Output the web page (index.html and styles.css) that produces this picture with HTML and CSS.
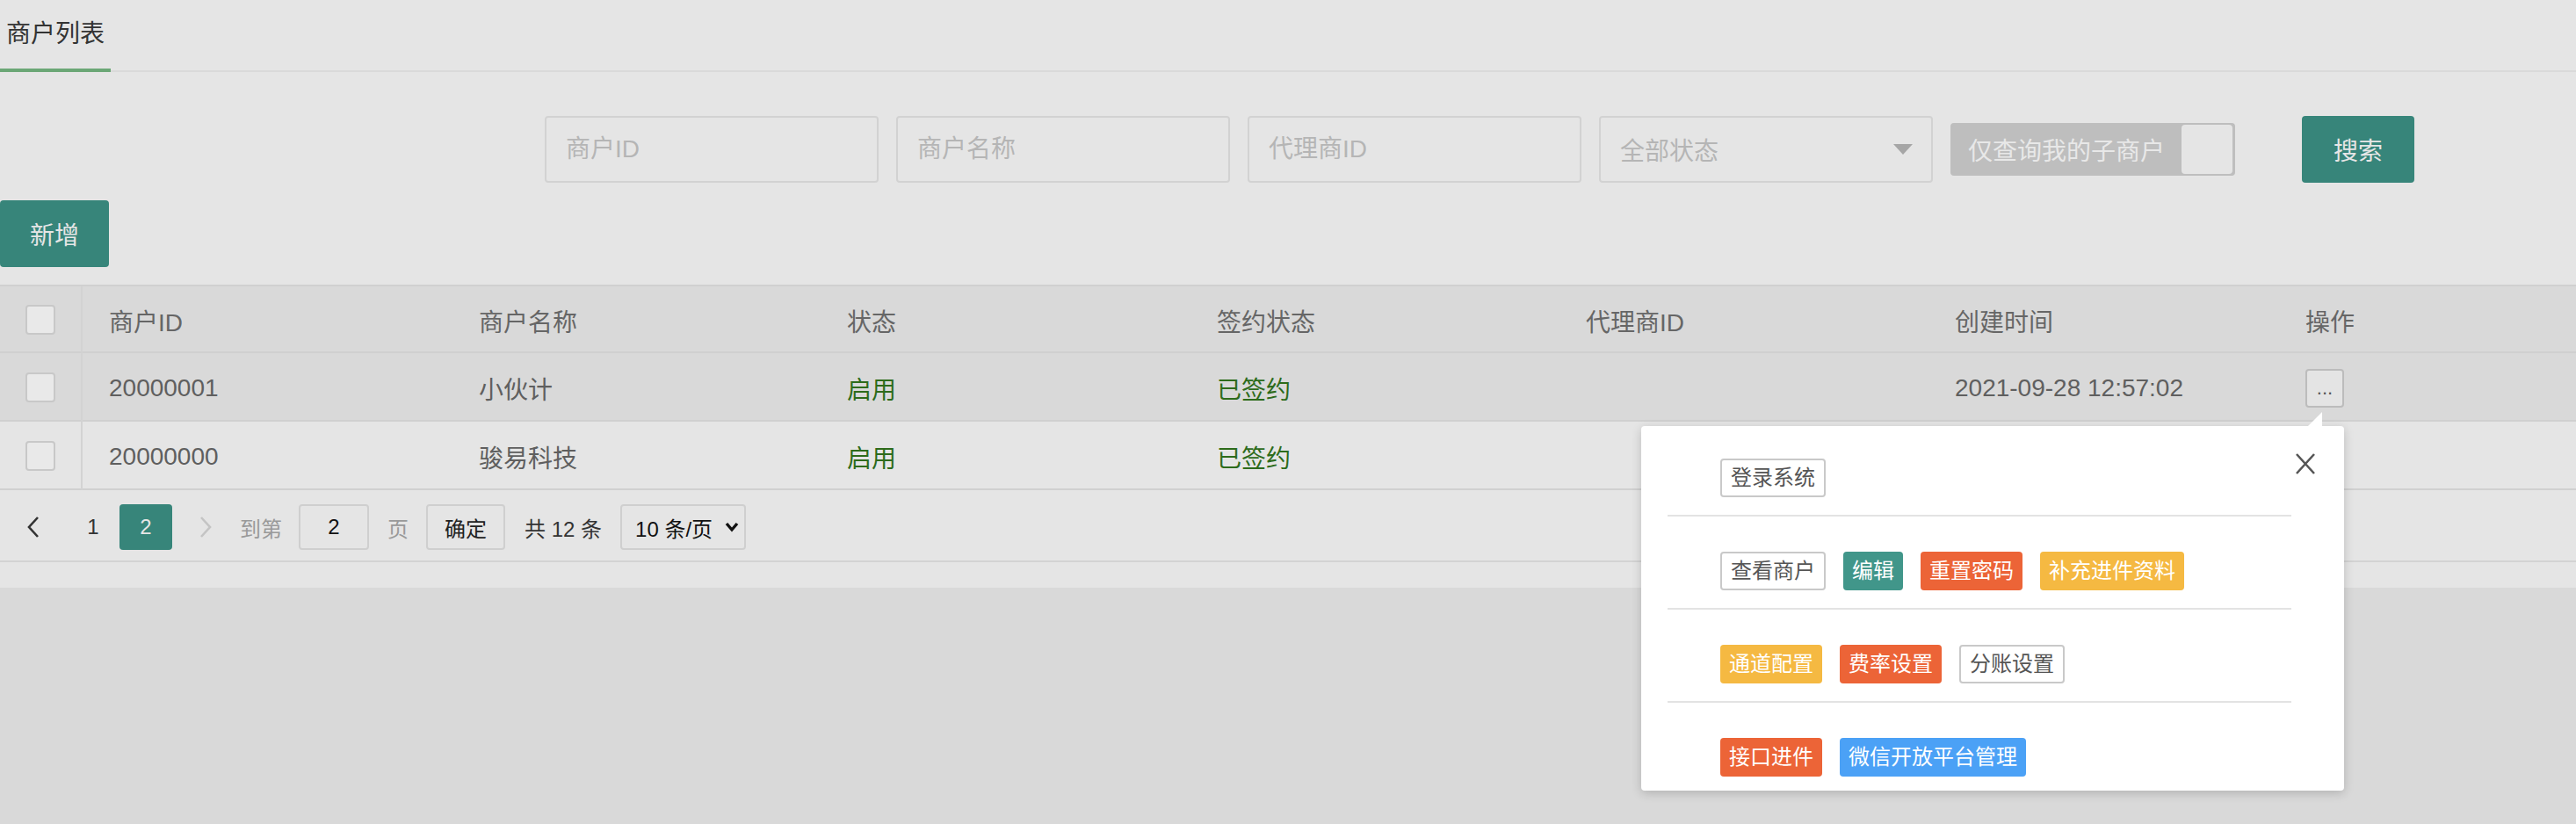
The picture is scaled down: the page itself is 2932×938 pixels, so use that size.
FILE: index.html
```html
<!DOCTYPE html>
<html lang="zh-CN">
<head>
    <meta charset="UTF-8">
    <meta name="viewport" content="width=device-width, initial-scale=1.0">
    <title>商户列表</title>
    <link rel="stylesheet" href="styles.css">
</head>
<body>
<div class="page">
    <ul class="tab-title">
        <li class="this">商户列表</li>
    </ul>

    <!-- search conditions -->
    <form class="search-bar">
        <input class="field" type="text" placeholder="商户ID">
        <input class="field" type="text" placeholder="商户名称">
        <input class="field" type="text" placeholder="代理商ID">
        <div class="field select-box">全部状态<i class="caret"></i></div>
        <div class="switch"><em>仅查询我的子商户</em><i class="knob"></i></div>
        <button type="button" class="btn btn-search">搜索</button>
    </form>

    <div class="toolbar">
        <button type="button" class="btn">新增</button>
    </div>

    <table class="grid">
        <colgroup>
            <col style="width: 94px">
            <col style="width: 421px">
            <col style="width: 419px">
            <col style="width: 421px">
            <col style="width: 420px">
            <col style="width: 420px">
            <col style="width: 399px">
            <col>
        </colgroup>
        <thead>
            <tr>
                <th class="check"><i class="checkbox"></i></th>
                <th>商户ID</th>
                <th>商户名称</th>
                <th>状态</th>
                <th>签约状态</th>
                <th>代理商ID</th>
                <th>创建时间</th>
                <th>操作</th>
            </tr>
        </thead>
        <tbody>
            <tr class="hover">
                <td class="check"><i class="checkbox"></i></td>
                <td>20000001</td>
                <td>小伙计</td>
                <td class="on">启用</td>
                <td class="on">已签约</td>
                <td></td>
                <td>2021-09-28 12:57:02</td>
                <td>
                    <div class="dropdown">
                        <button type="button" class="more">...</button>
                        <div class="menu-pop">
                            <span class="close">
                                <svg width="24" height="24" viewBox="0 0 24 24"><path d="M2 1 L22 23 M22 1 L2 23" stroke="#555" stroke-width="2.6" fill="none"/></svg>
                            </span>
                            <div class="act-row">
                                <button type="button" class="tag tag-line">登录系统</button>
                            </div>
                            <div class="act-row">
                                <button type="button" class="tag tag-line">查看商户</button>
                                <button type="button" class="tag tag-teal">编辑</button>
                                <button type="button" class="tag tag-red">重置密码</button>
                                <button type="button" class="tag tag-yellow">补充进件资料</button>
                            </div>
                            <div class="act-row">
                                <button type="button" class="tag tag-yellow">通道配置</button>
                                <button type="button" class="tag tag-red">费率设置</button>
                                <button type="button" class="tag tag-line">分账设置</button>
                            </div>
                            <div class="act-row">
                                <button type="button" class="tag tag-red">接口进件</button>
                                <button type="button" class="tag tag-blue">微信开放平台管理</button>
                            </div>
                        </div>
                    </div>
                </td>
            </tr>
            <tr>
                <td class="check"><i class="checkbox"></i></td>
                <td>20000000</td>
                <td>骏易科技</td>
                <td class="on">启用</td>
                <td class="on">已签约</td>
                <td></td>
                <td></td>
                <td></td>
            </tr>
        </tbody>
    </table>

    <!-- paging -->
    <div class="pager">
        <a class="pg prev">
            <svg width="14" height="24" viewBox="0 0 14 24"><path d="M12 1 L2 12 L12 23" stroke="#333" stroke-width="2.6" fill="none"/></svg>
        </a>
        <a class="pg num">1</a>
        <a class="pg cur">2</a>
        <a class="pg next">
            <svg width="14" height="24" viewBox="0 0 14 24"><path d="M2 1 L12 12 L2 23" stroke="#c4c4c4" stroke-width="2.6" fill="none"/></svg>
        </a>
        <span class="skip">到第</span>
        <input class="pg-input" type="text" value="2">
        <span class="skip unit">页</span>
        <button type="button" class="pg-btn">确定</button>
        <span class="count">共 12 条</span>
        <div class="limits">10 条/页
            <svg width="16" height="12" viewBox="0 0 16 12"><path d="M2 2 L8 9 L14 2" stroke="#111" stroke-width="3.4" fill="none"/></svg>
        </div>
    </div>
</div>
</body>
</html>
```

FILE: styles.css
```css
* {
    box-sizing: border-box;
}

html,
body {
    height: 100%;
}

body {
    margin: 0;
    min-height: 100vh;
    background-color: #d9d9d9;
    font-family: "Liberation Sans", "Noto Sans CJK SC", sans-serif;
    color: #5f5f5f;
}

.page {
    background-color: #e5e5e5;
    padding-bottom: 29px;
}

/* tab header */
.tab-title {
    display: flex;
    margin: 0;
    padding: 0;
    list-style: none;
    height: 82px;
    border-bottom: 2px solid #dadada;
}

.tab-title li {
    width: 126px;
    height: 82px;
    line-height: 78px;
    text-align: center;
    font-size: 28px;
    color: #333;
}

.tab-title li.this {
    border-bottom: 4px solid #6ba776;
}

/* search form */
.search-bar {
    display: flex;
    align-items: center;
    margin: 50px 0 0;
    padding-left: 620px;
}

.field {
    width: 380px;
    height: 76px;
    margin-right: 20px;
    padding: 0 22px;
    border: 2px solid #d2d2d2;
    border-radius: 4px;
    background: transparent;
    font-family: inherit;
    font-size: 28px;
    color: #555;
    outline: none;
}

.field::placeholder {
    color: #b5b5b5;
}

.select-box {
    display: flex;
    align-items: center;
    justify-content: space-between;
    color: #b5b5b5;
}

.caret {
    width: 0;
    height: 0;
    margin-right: -1px;
    border-left: 11px solid transparent;
    border-right: 11px solid transparent;
    border-top: 12px solid #a6a6a6;
}

.switch {
    display: flex;
    align-items: center;
    width: 324px;
    height: 60px;
    margin-right: 76px;
    padding-left: 18px;
    border: 2px solid #bebebe;
    border-radius: 4px;
    background-color: #bebebe;
}

.switch em {
    font-style: normal;
    font-size: 28px;
    color: #e8e8e8;
}

.knob {
    width: 58px;
    height: 56px;
    margin-left: auto;
    margin-right: 1px;
    border-radius: 4px;
    background-color: #e5e5e5;
}

.btn {
    height: 76px;
    padding: 0 34px;
    border: none;
    border-radius: 4px;
    background-color: #37857a;
    color: #e6e6e6;
    font-family: inherit;
    font-size: 28px;
    cursor: pointer;
}

.btn-search {
    padding: 0 36px;
}

.toolbar {
    margin-top: 20px;
}

/* data table */
.grid {
    width: 100%;
    margin-top: 20px;
    table-layout: fixed;
    border-collapse: separate;
    border-spacing: 0;
    border-top: 2px solid #d0d0d0;
    font-size: 28px;
}

.grid th,
.grid td {
    height: 78px;
    padding: 4px 30px 0;
    border-bottom: 2px solid #d0d0d0;
    text-align: left;
    font-weight: normal;
    white-space: nowrap;
}

.grid th {
    height: 76px;
    color: #666;
}

.grid thead tr,
.grid tr.hover {
    background-color: #d9d9d9;
}

.grid .check {
    padding: 2px 0 0;
    text-align: center;
    border-right: 2px solid #d3d3d3;
}

.grid td.on {
    color: #2d6b1b;
}

.checkbox {
    display: inline-block;
    width: 34px;
    height: 34px;
    vertical-align: middle;
    border: 2px solid #c8c8c8;
    border-radius: 4px;
    background-color: #e9e9e9;
}

/* row actions */
.dropdown {
    position: relative;
    display: inline-block;
    vertical-align: middle;
}

.more {
    display: block;
    width: 44px;
    height: 44px;
    padding: 0;
    border: 2px solid #bcbcbc;
    border-radius: 4px;
    background-color: #e4e4e4;
    color: #555;
    font-family: inherit;
    font-size: 22px;
    line-height: 34px;
}

.menu-pop {
    position: absolute;
    top: calc(100% + 21px);
    right: 0;
    z-index: 10;
    width: 800px;
    padding: 37px 60px 16px 30px;
    border-radius: 4px;
    background-color: #fff;
    box-shadow: 0 3px 12px rgba(0, 0, 0, 0.18);
    white-space: normal;
}

.menu-pop::before {
    content: "";
    position: absolute;
    top: -16px;
    right: 25px;
    border-left: 16px solid transparent;
    border-bottom: 16px solid #fff;
}

.close {
    position: absolute;
    top: 31px;
    right: 32px;
    line-height: 0;
    cursor: pointer;
}

.act-row {
    display: flex;
    gap: 20px;
    padding-left: 60px;
}

.act-row + .act-row {
    margin-top: 20px;
    padding-top: 40px;
    border-top: 2px solid #e3e3e3;
}

.tag {
    height: 44px;
    padding: 0 10px;
    border: none;
    border-radius: 4px;
    font-family: inherit;
    font-size: 24px;
    line-height: 44px;
    color: #fff;
    cursor: pointer;
}

.tag-line {
    border: 2px solid #c9c9c9;
    line-height: 40px;
    background-color: #fff;
    color: #555;
}

.tag-teal {
    background-color: #41968a;
}

.tag-red {
    background-color: #ec6437;
}

.tag-yellow {
    background-color: #f5b942;
}

.tag-blue {
    background-color: #4ba1f6;
}

/* pagination */
.pager {
    display: flex;
    align-items: center;
    padding: 16px 0 12px;
    border-bottom: 2px solid #d3d3d3;
    font-size: 24px;
    color: #333;
}

.pg {
    display: flex;
    align-items: center;
    justify-content: center;
    width: 60px;
    height: 52px;
}

.prev,
.num {
    margin-left: 8px;
}

.cur {
    border-radius: 4px;
    background-color: #37857a;
    color: #e6e6e6;
}

.next {
    width: 76px;
}

.skip {
    margin-left: 1px;
    color: #999;
}

.skip.unit {
    margin-left: 21px;
}

.pg-input,
.pg-btn,
.limits {
    height: 52px;
    border: 2px solid #cfcfcf;
    border-radius: 4px;
    background: transparent;
    font-family: inherit;
    font-size: 24px;
}

.pg-input {
    width: 80px;
    margin-left: 19px;
    text-align: center;
    color: #111;
}

.pg-btn {
    width: 90px;
    margin-left: 20px;
    color: #222;
}

.count {
    margin-left: 22px;
}

.limits {
    display: flex;
    align-items: center;
    justify-content: space-between;
    width: 143px;
    margin-left: 21px;
    padding: 0 6px 0 15px;
    color: #111;
}
```
